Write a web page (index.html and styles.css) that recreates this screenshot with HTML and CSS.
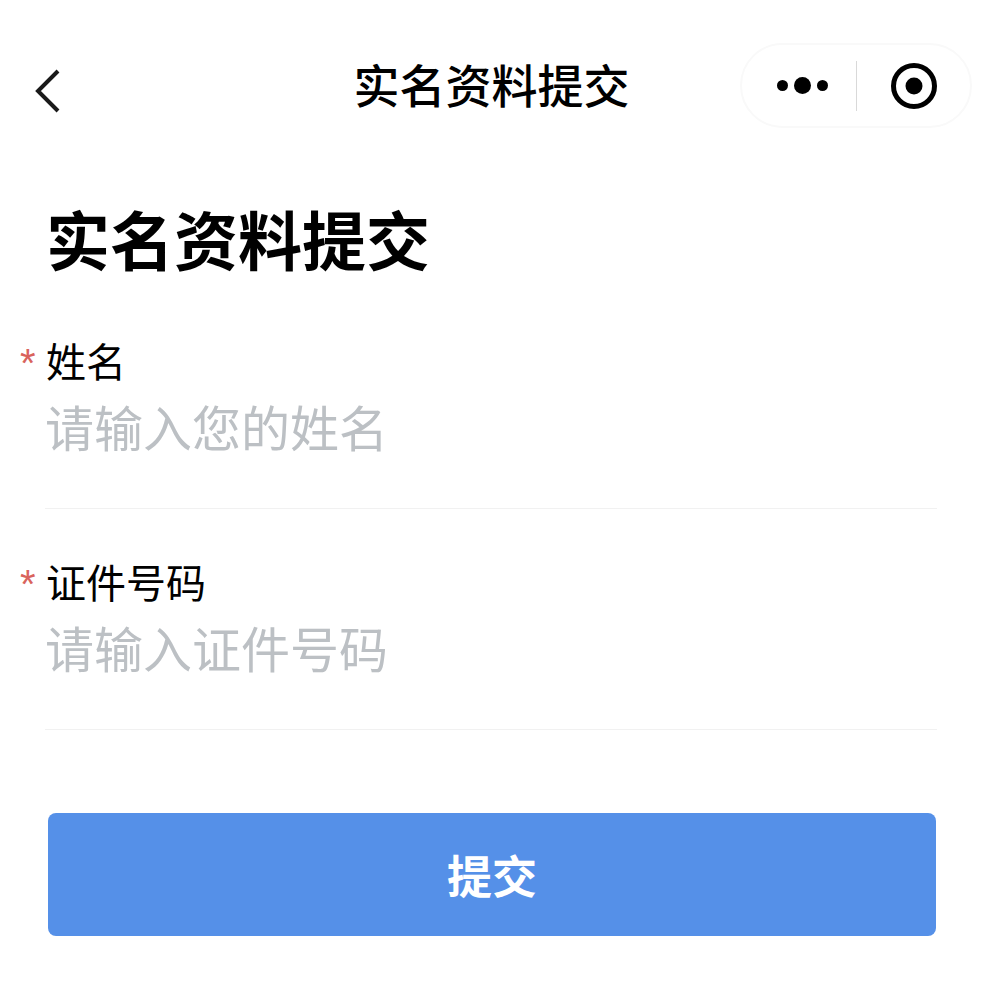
FILE: index.html
```html
<!DOCTYPE html>
<html lang="zh-CN">
<head>
    <meta charset="UTF-8">
    <meta name="viewport" content="width=device-width, initial-scale=1.0">
    <title>实名资料提交</title>
    <link rel="stylesheet" href="styles.css">
</head>
<body>
    <header class="nav">
        <svg class="back" width="26" height="46" viewBox="0 0 26 46">
            <path d="M23 3 L3 23 L23 43" fill="none" stroke="#1a1a1a" stroke-width="4"/>
        </svg>
        <div class="nav-title">实名资料提交</div>
        <div class="capsule">
            <div class="dots"><i></i><b></b><i></i></div>
            <div class="divider"></div>
            <svg class="target" width="48" height="48" viewBox="0 0 48 48">
                <circle cx="24" cy="24" r="20.5" fill="none" stroke="#000" stroke-width="5"/>
                <circle cx="24" cy="24" r="8.5" fill="#000"/>
            </svg>
        </div>
    </header>

    <h1>实名资料提交</h1>

    <form class="form">
        <div class="field">
            <div class="label"><span class="star">*</span>姓名</div>
            <div class="placeholder">请输入您的姓名</div>
        </div>
        <div class="field">
            <div class="label"><span class="star">*</span>证件号码</div>
            <div class="placeholder">请输入证件号码</div>
        </div>
        <button class="submit" type="button">提交</button>
    </form>
</body>
</html>
```

FILE: styles.css
```css
body {
    margin: 0;
    background: #fff;
    color: #000;
    font-family: "Noto Sans CJK SC", "Noto Sans", sans-serif;
}
.nav {
    position: relative;
    height: 128px;
    padding-top: 43px;
    box-sizing: border-box;
    display: flex;
    justify-content: flex-end;
    padding-right: 19px;
}
.back {
    position: absolute;
    left: 35px;
    top: 68px;
}
.nav-title {
    position: absolute;
    left: 0;
    right: 8px;
    top: 51px;
    text-align: center;
    font-size: 46px;
    line-height: 64px;
    font-weight: 500;
}
.capsule {
    width: 232px;
    height: 85px;
    box-sizing: border-box;
    border: 2px solid #f9f9f9;
    border-radius: 43px;
    display: flex;
    align-items: center;
}
.dots {
    width: 114px;
    padding-left: 35px;
    box-sizing: border-box;
    display: flex;
    align-items: center;
    gap: 6px;
}
.dots i {
    width: 11px;
    height: 11px;
    border-radius: 50%;
    background: #000;
}
.dots b {
    width: 17px;
    height: 17px;
    border-radius: 50%;
    background: #000;
}
.divider {
    width: 1px;
    height: 50px;
    background: #d9d9d9;
}
.target {
    margin-left: 33px;
}
h1 {
    margin: 74px 0 0 46px;
    font-size: 64px;
    line-height: 70px;
    font-weight: 700;
}
.form {
    margin: 0 54px 0 45px;
    padding-top: 60px;
}
.field {
    height: 177px;
    box-sizing: border-box;
    border-bottom: 1px solid #f1f1f1;
}
.field + .field {
    margin-top: 44px;
}
.label {
    position: relative;
    padding-left: 1px;
    font-size: 40px;
    line-height: 56px;
}
.star {
    position: absolute;
    left: -25px;
    top: 3px;
    color: #d9635c;
    font-family: "Liberation Sans", sans-serif;
}
.placeholder {
    margin-top: 4px;
    font-size: 49px;
    line-height: 68px;
    color: #bcc0c4;
}
.submit {
    display: block;
    width: 888px;
    height: 123px;
    margin: 83px 0 0 3px;
    border: none;
    border-radius: 8px;
    background: #5590e8;
    color: #fff;
    font-family: inherit;
    font-size: 45px;
    font-weight: 700;
}
```
